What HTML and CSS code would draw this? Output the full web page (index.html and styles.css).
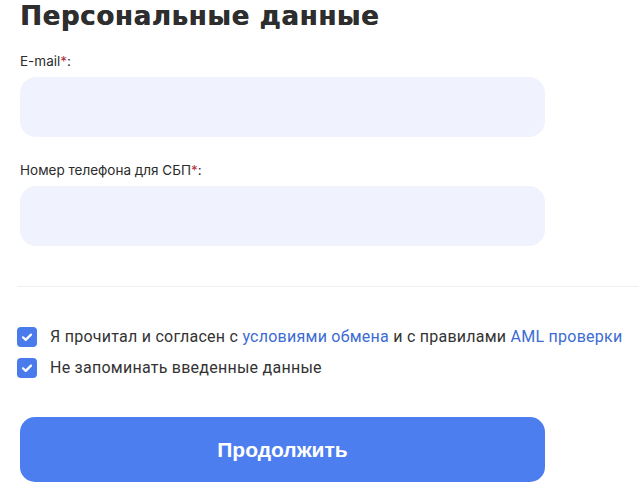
FILE: index.html
```html
<!DOCTYPE html>
<html lang="ru">
<head>
    <meta charset="UTF-8">
    <meta name="viewport" content="width=device-width, initial-scale=1.0">
    <title>Персональные данные</title>
    <link rel="stylesheet" href="styles.css">
</head>
<body>

<div id="personal">
    <h2 class="title">Персональные данные</h2>

    <div class="field">
        <label for="email">E-mail<span class="req">*</span>:</label>
        <input type="email" id="email"/>
    </div>
    <div class="field">
        <label for="phone">Номер телефона для СБП<span class="req">*</span>:</label>
        <input type="tel" id="phone"/>
    </div>

    <hr class="divider">

    <div class="agree">
        <label class="check">
            <span class="box"><svg viewBox="0 0 20 20" width="20" height="20"><path d="M6 10.3l2.7 2.6L14 7.6" fill="none" stroke="#fff" stroke-width="2.2" stroke-linecap="round" stroke-linejoin="round"/></svg></span>
            <span>Я прочитал и согласен с <a href="#">условиями обмена</a> и с правилами <a href="#">AML проверки</a></span>
        </label>
        <label class="check">
            <span class="box"><svg viewBox="0 0 20 20" width="20" height="20"><path d="M6 10.3l2.7 2.6L14 7.6" fill="none" stroke="#fff" stroke-width="2.2" stroke-linecap="round" stroke-linejoin="round"/></svg></span>
            <span>Не запоминать введенные данные</span>
        </label>
    </div>

    <button id="next">Продолжить</button>
</div>

</body>
</html>
```

FILE: styles.css
```css
* {
    margin: 0;
    padding: 0;
    box-sizing: border-box;
    outline: none;
}

body {
    background: #fff;
    font-family: 'Inter', 'Roboto', sans-serif;
    color: #333;
    overflow: hidden;
}

#personal {
    width: 545px;
    padding-left: 20px;
    display: flex;
    flex-direction: column;
}

.title {
    font-family: 'DejaVu Sans', sans-serif;
    font-weight: 800;
    font-size: 26px;
    line-height: 30px;
    margin-top: 1px;
    color: #2e2e2e;
    letter-spacing: 0.7px;
    text-shadow: 0.5px 0 0 #2e2e2e;
}

.field {
    display: flex;
    flex-direction: column;
}

.field label {
    font-size: 13.5px;
    line-height: 18px;
    margin-top: 21px;
    margin-bottom: 7px;
    color: #2b2b2b;
}

.field + .field label {
    margin-top: 24px;
}

.req {
    color: #b3303f;
}

.field input {
    height: 60px;
    border: none;
    border-radius: 16px;
    background: #f0f3fd;
}

.divider {
    border: none;
    border-top: 1px solid #efefef;
    margin: 40px -3px 0 -3px;
    width: calc(100% + 100px);
}

.agree {
    display: flex;
    flex-direction: column;
    gap: 11px;
    margin-top: 40px;
    margin-left: -3px;
}

.check {
    display: flex;
    align-items: center;
    gap: 13px;
    font-family: 'Roboto', sans-serif;
    font-size: 16px;
    line-height: 20px;
    letter-spacing: 0.25px;
    color: #333;
    white-space: nowrap;
}

.box {
    width: 20px;
    height: 20px;
    border-radius: 4px;
    background: #4a7bec;
    display: flex;
    flex-shrink: 0;
}

.check a {
    color: #3c6bd3;
    text-decoration: none;
}

#next {
    margin-top: 39px;
    height: 65px;
    border: none;
    border-radius: 15px;
    background: #4d7ef0;
    color: #fff;
    font-family: 'Liberation Sans', sans-serif;
    font-weight: 700;
    font-size: 21px;
}
```
